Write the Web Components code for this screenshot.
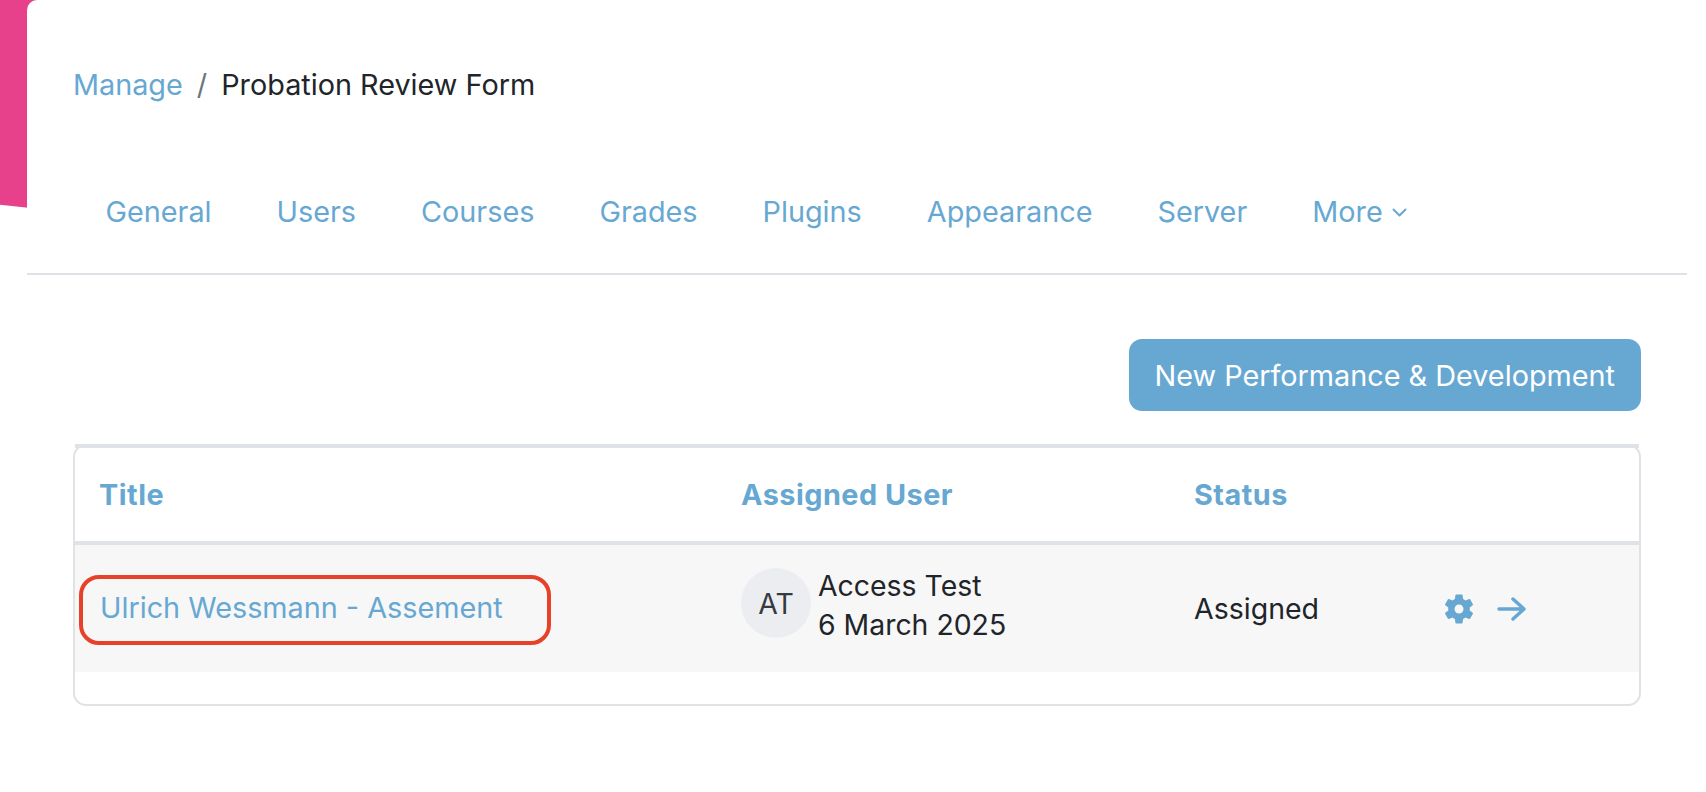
<!DOCTYPE html>
<html lang="en">
<head>
<meta charset="utf-8">
<title>Probation Review Form</title>
<style>
html, body { margin: 0; background: #fff; }
body { font: 400 28.8px/40px Inter, "Liberation Sans", sans-serif; color: #212529; }
</style>
</head>
<body>
<app-shell>
    <bread-crumbs current="Probation Review Form"><a href="#">Manage</a></bread-crumbs>
    <tab-nav>
        <tab-link>General</tab-link>
        <tab-link>Users</tab-link>
        <tab-link>Courses</tab-link>
        <tab-link>Grades</tab-link>
        <tab-link>Plugins</tab-link>
        <tab-link>Appearance</tab-link>
        <tab-link>Server</tab-link>
        <tab-link more>More</tab-link>
    </tab-nav>
    <page-content>
        <action-button slot="actions">New Performance &amp; Development</action-button>
        <form-table>
            <table-row head>
                <span>Title</span>
                <span>Assigned User</span>
                <span>Status</span>
                <span></span>
            </table-row>
            <table-row>
                <marked-link>Ulrich Wessmann - Assement</marked-link>
                <user-chip initials="AT"><span>Access Test</span><span>6 March 2025</span></user-chip>
                <span class="status" style="font-size: 28.5px">Assigned</span>
                <row-actions></row-actions>
            </table-row>
        </form-table>
    </page-content>
</app-shell>

<script>
const LINK = '#67a8d3';

class AppShell extends HTMLElement {
    constructor() {
        super();
        this.attachShadow({ mode: 'open' }).innerHTML = `
<style>
:host { display: block; position: relative; height: 792px; overflow: hidden; }
.ribbon {
    position: absolute; left: 0; top: 0; width: 40px; height: 209px;
    background: #e7418b;
    clip-path: polygon(0 0, 100% 0, 100% 100%, 0 98%);
}
.panel {
    position: relative; margin-left: 27px; height: 100%;
    background: #fff; border-top-left-radius: 10px;
}
</style>
<div class="ribbon"></div>
<div class="panel"><slot></slot></div>`;
    }
}

class BreadCrumbs extends HTMLElement {
    constructor() {
        super();
        this.attachShadow({ mode: 'open' }).innerHTML = `
<style>
:host { display: flex; padding: 65px 0 0 46px; height: 40px; }
::slotted(a) { color: ${LINK}; text-decoration: none; }
.sep { color: #6c757d; margin: 0 14px; }
</style>
<slot></slot><span class="sep">/</span><span class="cur"></span>`;
        this.shadowRoot.querySelector('.cur').textContent = this.getAttribute('current');
    }
}

class TabNav extends HTMLElement {
    constructor() {
        super();
        this.attachShadow({ mode: 'open' }).innerHTML = `
<style>
:host {
    display: flex; margin: 87px 19px 0 0; padding: 0 0 41px 46px;
    border-bottom: 2px solid #dee2e6;
}
</style>
<slot></slot>`;
    }
}

class TabLink extends HTMLElement {
    constructor() {
        super();
        const chevron = this.hasAttribute('more')
            ? `<svg width="15" height="9" viewBox="0 0 15 9" fill="none" stroke="${LINK}" stroke-width="2" stroke-linecap="round" stroke-linejoin="round"><path d="M1.5 1.5l6 6 6-6"/></svg>`
            : '';
        this.attachShadow({ mode: 'open' }).innerHTML = `
<style>
:host { display: flex; align-items: center; gap: 9px; padding: 0 32.5px; color: ${LINK}; }
</style>
<slot></slot>${chevron}`;
    }
}

class PageContent extends HTMLElement {
    constructor() {
        super();
        this.attachShadow({ mode: 'open' }).innerHTML = `
<style>
:host { display: block; padding: 64px 65px 0 46px; }
.actions { display: flex; justify-content: flex-end; margin-bottom: 33px; }
</style>
<div class="actions"><slot name="actions"></slot></div>
<slot></slot>`;
    }
}

class ActionButton extends HTMLElement {
    constructor() {
        super();
        this.attachShadow({ mode: 'open' }).innerHTML = `
<style>
:host {
    display: flex; align-items: center; box-sizing: border-box; height: 72px;
    padding: 2px 26px 0; background: ${LINK}; color: #fff; border-radius: 13px;
}
</style>
<slot></slot>`;
    }
}

class FormTable extends HTMLElement {
    constructor() {
        super();
        this.attachShadow({ mode: 'open' }).innerHTML = `
<style>
:host {
    display: block; height: 258px;
    border: 2px solid #e0e2e5; border-radius: 13px;
}
</style>
<slot></slot>`;
    }
}

class TableRow extends HTMLElement {
    constructor() {
        super();
        this.attachShadow({ mode: 'open' }).innerHTML = `
<style>
:host {
    display: grid; grid-template-columns: 642px 453px 251px 1fr;
    align-items: center; height: 127px; background: #f7f7f7;
}
:host([head]) {
    height: 93px; margin-top: -2px; background: transparent;
    border-top: 4px solid #dfe2e7; border-bottom: 4px solid #dfe2e7;
    color: ${LINK}; font-weight: 700; letter-spacing: .5px;
}
::slotted(*) { margin-left: 24px; }
</style>
<slot></slot>`;
    }
}

class MarkedLink extends HTMLElement {
    constructor() {
        super();
        this.attachShadow({ mode: 'open' }).innerHTML = `
<style>
:host {
    display: flex; align-items: center; box-sizing: border-box;
    width: 472px; height: 70px; margin: 3px 0 0 4px !important; padding: 0 0 5px 17px;
    border: 4px solid #e8412a; border-radius: 20px; color: ${LINK};
}
</style>
<slot></slot>`;
    }
}

class UserChip extends HTMLElement {
    constructor() {
        super();
        this.attachShadow({ mode: 'open' }).innerHTML = `
<style>
:host { display: flex; align-items: center; gap: 7px; margin-bottom: 11px; font-size: 28.4px; line-height: 39px; }
.avatar {
    display: flex; align-items: center; justify-content: center;
    width: 70px; height: 70px; border-radius: 50%;
    background: #ebedf1; color: #343a40;
}
.text { display: flex; flex-direction: column; margin-top: 4px; }
</style>
<div class="avatar"></div>
<div class="text"><slot></slot></div>`;
        this.shadowRoot.querySelector('.avatar').textContent = this.getAttribute('initials');
    }
}

class RowActions extends HTMLElement {
    constructor() {
        super();
        this.attachShadow({ mode: 'open' }).innerHTML = `
<style>
:host { display: flex; align-items: center; gap: 20px; margin-left: 20px !important; }
svg { display: block; }
</style>
<svg width="36" height="36" viewBox="0 0 24 24" fill="${LINK}" fill-rule="evenodd"><path d="M19.14 12.94c.04-.3.06-.61.06-.94 0-.32-.02-.64-.07-.94l2.03-1.58c.18-.14.23-.41.12-.61l-1.92-3.32c-.12-.22-.37-.29-.59-.22l-2.39.96c-.5-.38-1.03-.7-1.62-.94l-.36-2.54c-.04-.24-.24-.41-.48-.41h-3.84c-.24 0-.43.17-.47.41l-.36 2.54c-.59.24-1.13.57-1.62.94l-2.39-.96c-.22-.08-.47 0-.59.22L2.74 8.87c-.12.21-.08.47.12.61l2.03 1.58c-.05.3-.09.63-.09.94s.02.64.07.94l-2.03 1.58c-.18.14-.23.41-.12.61l1.92 3.32c.12.22.37.29.59.22l2.39-.96c.5.38 1.03.7 1.62.94l.36 2.54c.05.24.24.41.48.41h3.84c.24 0 .44-.17.47-.41l.36-2.54c.59-.24 1.13-.56 1.62-.94l2.39.96c.22.08.47 0 .59-.22l1.92-3.32c.12-.22.07-.47-.12-.61l-2.01-1.58zM12 15c-1.65 0-3-1.35-3-3s1.35-3 3-3 3 1.35 3 3-1.35 3-3 3z"/></svg>
<svg width="29" height="24" viewBox="0 0 29 24" fill="none" stroke="${LINK}" stroke-width="3.5" stroke-linecap="round" stroke-linejoin="round"><path d="M2 12h25M16 2l11 10-11 10"/></svg>`;
    }
}

customElements.define('app-shell', AppShell);
customElements.define('bread-crumbs', BreadCrumbs);
customElements.define('tab-nav', TabNav);
customElements.define('tab-link', TabLink);
customElements.define('page-content', PageContent);
customElements.define('action-button', ActionButton);
customElements.define('form-table', FormTable);
customElements.define('table-row', TableRow);
customElements.define('marked-link', MarkedLink);
customElements.define('user-chip', UserChip);
customElements.define('row-actions', RowActions);
</script>
</body>
</html>
